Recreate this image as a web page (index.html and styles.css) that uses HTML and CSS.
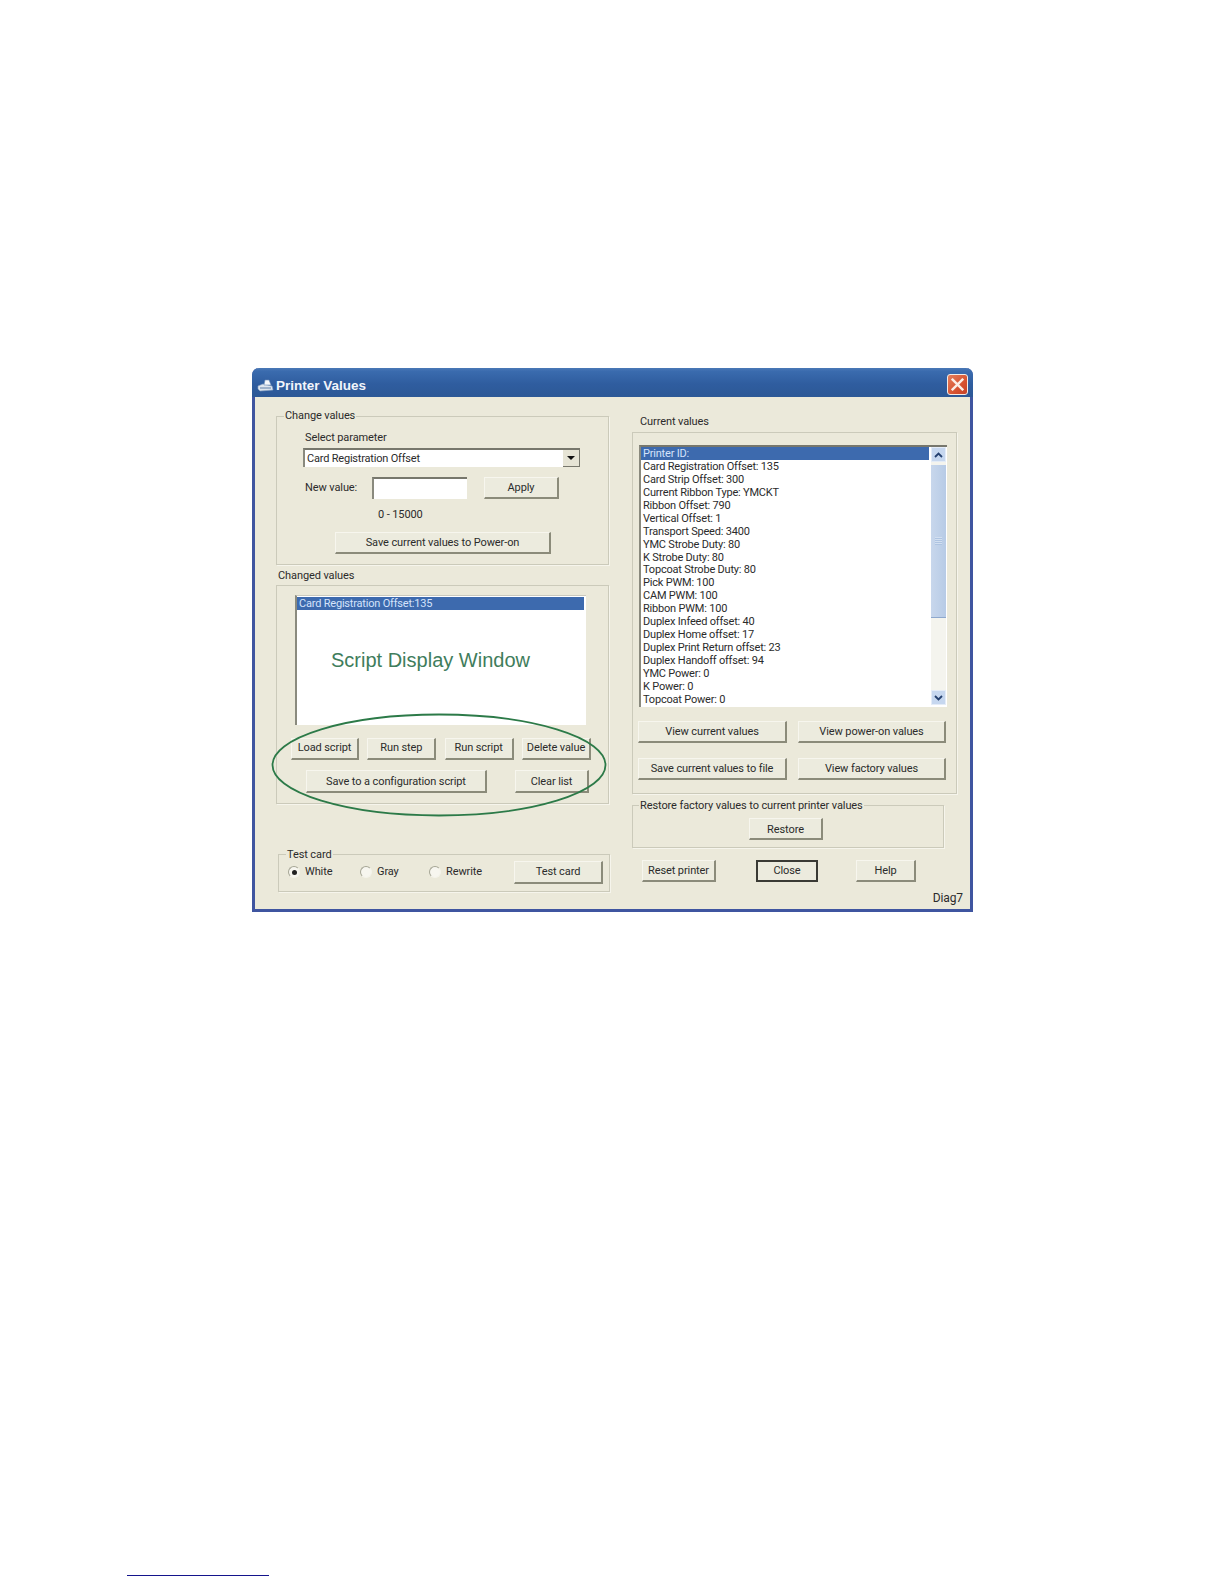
FILE: index.html
```html
<!DOCTYPE html>
<html lang="en">
<head>
<meta charset="utf-8">
<title>Printer Values</title>
<link rel="stylesheet" href="styles.css">
</head>
<body>
<main class="window">
  <header class="titlebar">
    <svg class="app-icon" viewBox="0 0 17 13" width="17" height="13" aria-hidden="true">
      <path d="M1 7 L6 5 L15 7 L16 11 L3 12 L1 10 Z" fill="#dfe6ee" stroke="#8fa6c4" stroke-width=".6"/>
      <path d="M8 1 L12 1 L14 6 L7 6 Z" fill="#f6f8fb" stroke="#6f8fb8" stroke-width=".6"/>
      <path d="M3 9 H14" stroke="#5f7fa8" stroke-width="1"/>
    </svg>
    <h1 class="title">Printer Values</h1>
    <button class="close-x" aria-label="Close">
      <svg viewBox="0 0 12 12" width="13" height="13" aria-hidden="true"><path d="M1.5 1.5 L10.5 10.5 M10.5 1.5 L1.5 10.5" stroke="#fbeee6" stroke-width="2.2" stroke-linecap="square"/></svg>
    </button>
  </header>
  <div class="client">
    <section class="col-left">
      <fieldset class="group change-group">
        <legend>Change values</legend>
        <div class="select-label">Select parameter</div>
        <div class="combo">
          <span class="combo-text">Card Registration Offset</span>
          <span class="combo-arrow"></span>
        </div>
        <div class="value-row">
          <span class="value-label">New value:</span>
          <span class="text-input"></span>
          <button class="btn w-apply">Apply</button>
        </div>
        <div class="range">0 - 15000</div>
        <button class="btn w-save-power">Save current values to Power-on</button>
      </fieldset>

      <div class="plain-label changed-label">Changed values</div>
      <div class="group changed-group">
        <div class="script-list">
          <div class="row selected">Card Registration Offset:135</div>
          <div class="script-note">Script Display Window</div>
        </div>
        <div class="btn-row row-a">
          <button class="btn w-68">Load script</button>
          <button class="btn w-69">Run step</button>
          <button class="btn w-69">Run script</button>
          <button class="btn w-69">Delete value</button>
        </div>
        <div class="btn-row row-b">
          <button class="btn w-config">Save to a configuration script</button>
          <button class="btn w-clear">Clear list</button>
        </div>
        <svg class="callout" viewBox="0 0 336 104" width="336" height="104" aria-hidden="true">
          <ellipse cx="168" cy="52" rx="166.5" ry="50.5" fill="none" stroke="#2c7a48" stroke-width="1.8"/>
        </svg>
      </div>

      <fieldset class="group test-group">
        <legend>Test card</legend>
        <div class="test-row">
          <label class="radio-item w-white"><span class="radio on"></span>White</label>
          <label class="radio-item w-gray"><span class="radio"></span>Gray</label>
          <label class="radio-item w-rewrite"><span class="radio"></span>Rewrite</label>
          <button class="btn w-test">Test card</button>
        </div>
      </fieldset>
    </section>

    <section class="col-right">
      <div class="plain-label current-label">Current values</div>
      <div class="group current-group">
        <div class="values-list">
          <div class="values-rows">
            <div class="row selected">Printer ID:</div>
            <div class="row">Card Registration Offset: 135</div>
            <div class="row">Card Strip Offset: 300</div>
            <div class="row">Current Ribbon Type: YMCKT</div>
            <div class="row">Ribbon Offset: 790</div>
            <div class="row">Vertical Offset: 1</div>
            <div class="row">Transport Speed: 3400</div>
            <div class="row">YMC Strobe Duty: 80</div>
            <div class="row">K Strobe Duty: 80</div>
            <div class="row">Topcoat Strobe Duty: 80</div>
            <div class="row">Pick PWM: 100</div>
            <div class="row">CAM PWM: 100</div>
            <div class="row">Ribbon PWM: 100</div>
            <div class="row">Duplex Infeed offset: 40</div>
            <div class="row">Duplex Home offset: 17</div>
            <div class="row">Duplex Print Return offset: 23</div>
            <div class="row">Duplex Handoff offset: 94</div>
            <div class="row">YMC Power: 0</div>
            <div class="row">K Power: 0</div>
            <div class="row">Topcoat Power: 0</div>
          </div>
          <div class="scrollbar">
            <span class="sb-btn">
              <svg viewBox="0 0 9 6" width="9" height="6" aria-hidden="true"><path d="M1 5 L4.5 1.5 L8 5" fill="none" stroke="#24406f" stroke-width="1.8"/></svg>
            </span>
            <span class="sb-thumb"><span class="sb-grip"></span></span>
            <span class="sb-track"></span>
            <span class="sb-btn">
              <svg viewBox="0 0 9 6" width="9" height="6" aria-hidden="true"><path d="M1 1 L4.5 4.5 L8 1" fill="none" stroke="#24406f" stroke-width="1.8"/></svg>
            </span>
          </div>
        </div>
        <div class="btn-row row-c">
          <button class="btn w-149">View current values</button>
          <button class="btn w-148">View power-on values</button>
        </div>
        <div class="btn-row row-d">
          <button class="btn w-149">Save current values to file</button>
          <button class="btn w-148">View factory values</button>
        </div>
      </div>

      <fieldset class="group restore-group">
        <legend>Restore factory values to current printer values</legend>
        <button class="btn w-restore">Restore</button>
      </fieldset>

      <div class="action-row">
        <button class="btn w-reset">Reset printer</button>
        <button class="btn default w-close">Close</button>
        <button class="btn w-help">Help</button>
      </div>
      <div class="diag">Diag7</div>
    </section>
  </div>
</main>
<div class="page-rule"></div>
</body>
</html>
```
FILE: styles.css
```css
* { box-sizing: border-box; }
html, body { margin: 0; padding: 0; background: #fff; }
body {
  font-family: Roboto, "Liberation Sans", Arial, sans-serif;
  font-size: 11px;
  letter-spacing: -0.1px;
  line-height: 14px;
  color: #2b2b2b;
}
.window {
  width: 721px;
  margin: 368px 0 0 252px;
  border: 3px solid #3f55a0;
  border-top: 0;
  border-radius: 7px 7px 0 0;
  background: #ebe9da;
}
.titlebar {
  height: 29px;
  margin: 0 -3px;
  padding: 0 5px 0 5px;
  display: flex;
  align-items: center;
  border-radius: 7px 7px 0 0;
  background: linear-gradient(#4a78b6 0, #3a6bae 12%, #2f5d9f 55%, #2c5896 100%);
}
.app-icon { flex: none; margin: 6px 2px 0 0; }
.title {
  margin: 7px 0 0;
  flex: 1;
  font-family: "Liberation Sans", Arial, sans-serif;
  font-size: 13.5px;
  font-weight: bold;
  line-height: 16px;
  color: #f1f5fb;
  letter-spacing: 0;
}
.close-x {
  width: 21px;
  height: 21px;
  margin-top: 3px;
  padding: 0;
  display: flex;
  align-items: center;
  justify-content: center;
  border: 1px solid #f3ece6;
  border-radius: 3px;
  background: linear-gradient(135deg, #e57f5c, #d5502f 65%, #c4432a);
}
.client {
  display: flex;
  padding: 12px 0 1px 21px;
  height: 512px;
}
.col-left { width: 334px; flex: none; }
.col-right { width: 337px; flex: none; margin-left: 22px; padding-top: 6px; }

.group {
  margin: 0;
  padding: 0;
  min-width: 0;
  border: 1px solid #cbcaba;
  box-shadow: 1px 1px 0 #f6f5ec;
}
legend { padding: 0 1px; margin-left: 7px; line-height: 14px; }
.test-group legend, .restore-group legend { line-height: 12px; padding-top: 2px; }
.restore-group legend { margin-left: 6px; }
.plain-label { line-height: 14px; }

.change-group { width: 333px; padding-bottom: 10px; }
.select-label { margin: 8px 0 0 28px; }
.combo {
  width: 277px;
  height: 19px;
  margin: 3px 0 0 26px;
  display: flex;
  align-items: center;
  justify-content: space-between;
  background: #fff;
  border-top: 2px solid #77776c;
  border-left: 2px solid #8a8a7e;
  padding-left: 2px;
}
.combo-text { letter-spacing: -0.2px; }
.combo-arrow {
  position: relative;
  width: 17px;
  height: 17px;
  background: #e6e4d5;
  border-right: 1px solid #77776c;
  border-bottom: 1px solid #77776c;
}
.combo-arrow::after {
  content: "";
  position: absolute;
  left: 4px;
  top: 6px;
  border-left: 4px solid transparent;
  border-right: 4px solid transparent;
  border-top: 4px solid #111;
}
.value-row { display: flex; align-items: center; margin: 10px 0 0 28px; }
.value-label { width: 67px; }
.text-input {
  width: 95px;
  height: 22px;
  margin-right: 17px;
  background: #fff;
  border-top: 2px solid #77776c;
  border-left: 2px solid #8a8a7e;
}
.range { margin: 9px 0 0 101px; }

.btn {
  display: block;
  height: 22px;
  padding: 0;
  font: inherit;
  letter-spacing: inherit;
  line-height: 14px;
  color: #2b2b2b;
  white-space: nowrap;
  background: #ecebde;
  border: 1px solid #f7f6ee;
  border-right: 2px solid #8b8b7a;
  border-bottom: 2px solid #8b8b7a;
}
.btn.default { border: 2px solid #3a3a34; }
.w-apply { width: 75px; }
.w-save-power { width: 216px; margin: 10px 0 0 58px; }
.w-68 { width: 68px; }
.w-69 { width: 69px; }
.row-a .btn { padding-bottom: 2px; }
.w-config { width: 181px; height: 23px; padding-top: 2px; }
.w-clear { width: 74px; height: 23px; padding-top: 2px; }
.w-149 { width: 149px; }
.w-148 { width: 148px; }
.w-test { width: 89px; height: 23px; }
.w-restore { width: 74px; margin: 6px 0 7px 116px; padding-top: 2px; }
.w-reset { width: 74px; }
.w-close { width: 62px; margin-left: 40px; }
.w-help { width: 60px; margin-left: 38px; }

.changed-label { margin: 4px 0 2px 2px; }
.changed-group { position: relative; width: 333px; padding: 9px 0 10px; }
.script-list {
  width: 291px;
  height: 130px;
  margin-left: 18px;
  padding: 1px 2px 0 0;
  background: #fff;
  border-left: 2px solid #8a8a7e;
  border-top: 1px solid #c9c9be;
}
.row { height: 12.95px; line-height: 13px; padding-left: 2px; letter-spacing: -0.2px; white-space: nowrap; }
.row.selected { background: #3d6aae; color: #d4e3fb; }
.script-list .row.selected { height: 13px; }
.script-note {
  margin: 38px 0 0 34px;
  font-family: "Liberation Sans", Arial, sans-serif;
  font-size: 20px;
  letter-spacing: 0;
  line-height: 24px;
  color: #3f7d5c;
}
.btn-row { display: flex; justify-content: space-between; }
.row-a { width: 300px; margin: 13px 0 0 14px; }
.row-b { width: 283px; margin: 10px 0 0 29px; }
.callout { position: absolute; left: -6px; top: 127px; pointer-events: none; }

.test-group { width: 332px; margin: 43px 0 0 2px; padding: 0 0 7px; }
.test-row { display: flex; align-items: center; padding-left: 9px; }
.radio-item { display: flex; align-items: center; padding-bottom: 1px; }
.w-white { width: 72px; }
.w-gray { width: 69px; }
.w-rewrite { width: 85px; }
.radio {
  position: relative;
  width: 12px;
  height: 12px;
  margin-right: 5px;
  border-radius: 50%;
  background: #f7f6ef;
  border: 1px solid #a5a595;
  border-right-color: #f4f3ea;
  border-bottom-color: #f4f3ea;
}
.radio.on::after {
  content: "";
  position: absolute;
  left: 2.5px;
  top: 2.5px;
  width: 5px;
  height: 5px;
  border-radius: 50%;
  background: #222;
}

.current-label { margin: 0 0 3px 8px; }
.current-group { width: 325px; height: 362px; padding: 12px 0 0 6px; }
.values-list {
  width: 308px;
  height: 262px;
  display: flex;
  background: #fff;
  border-top: 2px solid #77776c;
  border-left: 2px solid #8a8a7e;
}
.values-rows { width: 288px; flex: none; }
.scrollbar {
  width: 15px;
  margin-left: 2px;
  height: 258px;
  display: flex;
  flex-direction: column;
  background: #f4f4ee;
}
.sb-btn {
  height: 15px;
  flex: none;
  display: flex;
  align-items: center;
  justify-content: center;
  background: #c6d7ef;
  border: 1px solid #e4ecf7;
}
.sb-thumb {
  height: 153px;
  margin-top: 3px;
  flex: none;
  display: flex;
  align-items: center;
  justify-content: center;
  background: linear-gradient(90deg, #c8d7ec, #b7cbe6);
  border-bottom: 1px solid #8ea8cd;
}
.sb-grip {
  width: 7px;
  height: 8px;
  background: repeating-linear-gradient(#d2dff0 0 1px, #aec4e2 1px 2px);
}
.sb-track { flex: 1; }
.row-c { width: 308px; margin: 14px 0 0 -1px; }
.row-d { width: 308px; margin: 15px 0 0 -1px; }

.restore-group { width: 312px; margin-top: 4px; }
.action-row { display: flex; margin: 12px 0 0 10px; }
.diag { margin-top: 9px; padding-right: 6px; text-align: right; font-size: 12px; }

.page-rule { width: 142px; height: 1px; margin: 663px 0 0 127px; background: #14148c; }
```
